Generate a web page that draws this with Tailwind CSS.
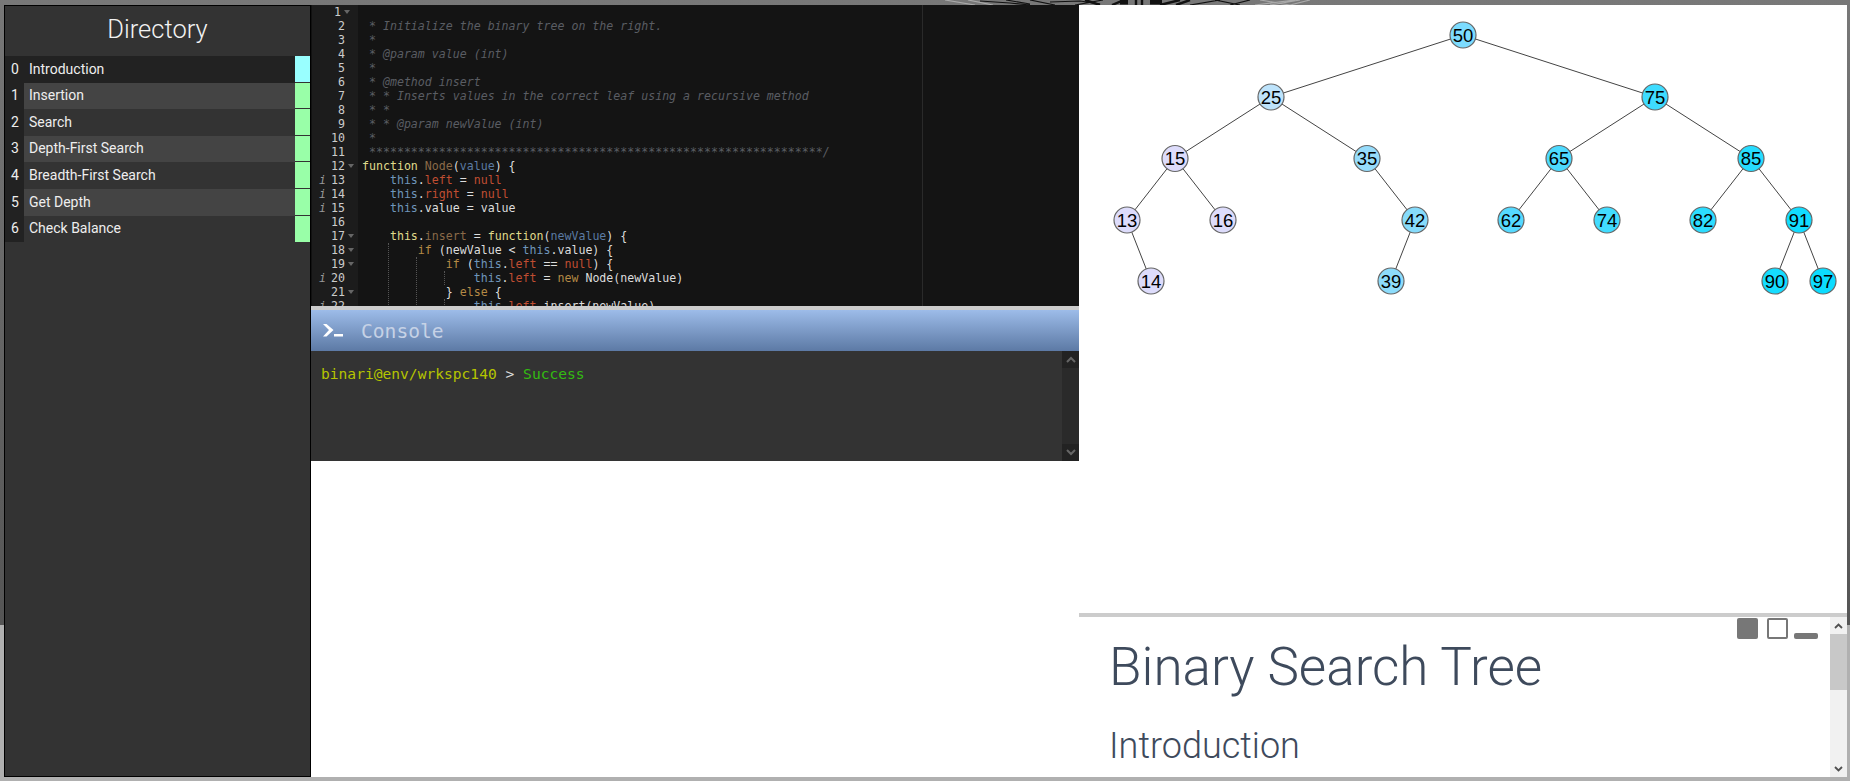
<!DOCTYPE html>
<html lang="en">
<head>
<meta charset="utf-8">
<title>Binary Search Tree</title>
<script src="https://cdn.jsdelivr.net/npm/@tailwindcss/browser@4"></script>
</head>
<body class="overflow-hidden">
<div class="relative w-[1850px] h-[781px] overflow-hidden bg-[#b0b0b0] pt-[5px] pl-[4px] pr-[3px] pb-[4px] flex font-['Roboto',sans-serif]">
  <!-- window backdrop -->
  <div class="absolute left-0 top-0 w-full h-[625px] bg-linear-to-b from-[#787878] to-[#555555]"></div>
  <svg class="absolute left-0 top-0" width="1850" height="5" aria-hidden="true" fill="none" stroke="#111" stroke-width="1.2">
    <path stroke="#aaa" d="M945 0l30 5M968 0l25 5M1255 5l40-5M1270 5l30-5M1290 5l20-5M1260 0l30 5"/>
    <path d="M980 1l30 2 20 2M1006 0l24 4M1030 0l25 5M1050 2l30-1 20 3M1075 5l28-5M1190 5l30-5M1215 0l25 5M1230 5l20-5"/>
    <path stroke-width="2.4" d="M1085 0l15 5M1112 5l12-5M1136 0v5M1142 0v5M1160 5l20-5M1176 5l14-5"/>
    <path stroke-width="5" d="M1120 2h8M1150 2h12"/>
  </svg>

  <!-- directory -->
  <aside class="relative w-[307px] h-[772px] shrink-0 border border-black bg-[#333333] text-[#eeeeee]">
    <h2 class="h-[50px] pb-[4px] flex items-center justify-center text-[25.5px] font-light text-[#f2f2f2]">Directory</h2>
    <ul class="text-[14px]">
      <li class="h-[26.6px] flex bg-[#222222]"><span class="w-[19px] pb-[0.5px] flex items-center justify-center pl-[1px]">0</span><span class="flex-1 pb-[0.5px] flex items-center pl-[5px]">Introduction</span><span class="w-[15px] bg-[#99ffff] border-b border-[#333333]"></span></li>
      <li class="h-[26.6px] flex bg-[#444444]"><span class="w-[19px] pb-[0.5px] flex items-center justify-center pl-[1px] bg-[#222222]">1</span><span class="flex-1 pb-[0.5px] flex items-center pl-[5px]">Insertion</span><span class="w-[15px] bg-[#99ffa8] border-b border-[#333333]"></span></li>
      <li class="h-[26.6px] flex bg-[#333333]"><span class="w-[19px] pb-[0.5px] flex items-center justify-center pl-[1px] bg-[#222222]">2</span><span class="flex-1 pb-[0.5px] flex items-center pl-[5px]">Search</span><span class="w-[15px] bg-[#99ffa8] border-b border-[#333333]"></span></li>
      <li class="h-[26.6px] flex bg-[#444444]"><span class="w-[19px] pb-[0.5px] flex items-center justify-center pl-[1px] bg-[#222222]">3</span><span class="flex-1 pb-[0.5px] flex items-center pl-[5px]">Depth-First Search</span><span class="w-[15px] bg-[#99ffa8] border-b border-[#333333]"></span></li>
      <li class="h-[26.6px] flex bg-[#333333]"><span class="w-[19px] pb-[0.5px] flex items-center justify-center pl-[1px] bg-[#222222]">4</span><span class="flex-1 pb-[0.5px] flex items-center pl-[5px]">Breadth-First Search</span><span class="w-[15px] bg-[#99ffa8] border-b border-[#333333]"></span></li>
      <li class="h-[26.6px] flex bg-[#444444]"><span class="w-[19px] pb-[0.5px] flex items-center justify-center pl-[1px] bg-[#222222]">5</span><span class="flex-1 pb-[0.5px] flex items-center pl-[5px]">Get Depth</span><span class="w-[15px] bg-[#99ffa8] border-b border-[#333333]"></span></li>
      <li class="h-[26.6px] flex bg-[#333333]"><span class="w-[19px] pb-[0.5px] flex items-center justify-center pl-[1px] bg-[#222222]">6</span><span class="flex-1 pb-[0.5px] flex items-center pl-[5px]">Check Balance</span><span class="w-[15px] bg-[#99ffa8]"></span></li>
    </ul>
  </aside>

  <!-- editor + console -->
  <main class="relative w-[768px] h-[772px] shrink-0 bg-white flex flex-col">
    <div class="relative h-[301px] shrink-0 overflow-hidden flex bg-[#141414] font-['DejaVu_Sans_Mono',monospace] text-[11.6px] leading-[14px]">
      <div class="w-[47px] shrink-0 bg-[#1c1c1c] text-[#cccccc] border-l border-[#111111]">
        <div class="relative h-[14px] pr-[17px] text-right">1<i class="absolute right-[8px] top-[5px] w-0 h-0 border-x-[3px] border-t-[4px] border-x-transparent border-t-[#666666]"></i></div>
        <div class="relative h-[14px] pr-[13px] text-right">2</div>
        <div class="relative h-[14px] pr-[13px] text-right">3</div>
        <div class="relative h-[14px] pr-[13px] text-right">4</div>
        <div class="relative h-[14px] pr-[13px] text-right">5</div>
        <div class="relative h-[14px] pr-[13px] text-right">6</div>
        <div class="relative h-[14px] pr-[13px] text-right">7</div>
        <div class="relative h-[14px] pr-[13px] text-right">8</div>
        <div class="relative h-[14px] pr-[13px] text-right">9</div>
        <div class="relative h-[14px] pr-[13px] text-right">10</div>
        <div class="relative h-[14px] pr-[13px] text-right">11</div>
        <div class="relative h-[14px] pr-[13px] text-right">12<i class="absolute right-[4px] top-[5px] w-0 h-0 border-x-[3px] border-t-[4px] border-x-transparent border-t-[#666666]"></i></div>
        <div class="relative h-[14px] pr-[13px] text-right"><em class="absolute left-[7px] text-[#999999]">i</em>13</div>
        <div class="relative h-[14px] pr-[13px] text-right"><em class="absolute left-[7px] text-[#999999]">i</em>14</div>
        <div class="relative h-[14px] pr-[13px] text-right"><em class="absolute left-[7px] text-[#999999]">i</em>15</div>
        <div class="relative h-[14px] pr-[13px] text-right">16</div>
        <div class="relative h-[14px] pr-[13px] text-right">17<i class="absolute right-[4px] top-[5px] w-0 h-0 border-x-[3px] border-t-[4px] border-x-transparent border-t-[#666666]"></i></div>
        <div class="relative h-[14px] pr-[13px] text-right">18<i class="absolute right-[4px] top-[5px] w-0 h-0 border-x-[3px] border-t-[4px] border-x-transparent border-t-[#666666]"></i></div>
        <div class="relative h-[14px] pr-[13px] text-right">19<i class="absolute right-[4px] top-[5px] w-0 h-0 border-x-[3px] border-t-[4px] border-x-transparent border-t-[#666666]"></i></div>
        <div class="relative h-[14px] pr-[13px] text-right"><em class="absolute left-[7px] text-[#999999]">i</em>20</div>
        <div class="relative h-[14px] pr-[13px] text-right">21<i class="absolute right-[4px] top-[5px] w-0 h-0 border-x-[3px] border-t-[4px] border-x-transparent border-t-[#666666]"></i></div>
        <div class="relative h-[14px] pr-[13px] text-right"><em class="absolute left-[7px] text-[#999999]">i</em>22</div>
      </div>
      <div class="relative flex-1 pl-[4px] text-[#dddddd]">
        <div class="h-[14px]"></div>
        <div class="h-[14px] whitespace-pre italic text-[#5a5d63]"> * Initialize the binary tree on the right.</div>
        <div class="h-[14px] whitespace-pre italic text-[#5a5d63]"> *</div>
        <div class="h-[14px] whitespace-pre italic text-[#5a5d63]"> * @param value (int)</div>
        <div class="h-[14px] whitespace-pre italic text-[#5a5d63]"> *</div>
        <div class="h-[14px] whitespace-pre italic text-[#5a5d63]"> * @method insert</div>
        <div class="h-[14px] whitespace-pre italic text-[#5a5d63]"> * * Inserts values in the correct leaf using a recursive method</div>
        <div class="h-[14px] whitespace-pre italic text-[#5a5d63]"> * *</div>
        <div class="h-[14px] whitespace-pre italic text-[#5a5d63]"> * * @param newValue (int)</div>
        <div class="h-[14px] whitespace-pre italic text-[#5a5d63]"> *</div>
        <div class="h-[14px] whitespace-pre italic text-[#5a5d63]"> *****************************************************************/</div>
        <div class="h-[14px] whitespace-pre"><span class="text-[#e0dc8c]">function</span> <span class="text-[#8a6a48]">Node</span>(<span class="text-[#5b7ba3]">value</span>) {</div>
        <div class="h-[14px] whitespace-pre">    <span class="text-[#6f96bb]">this</span>.<span class="text-[#c04e32]">left</span> = <span class="text-[#c04e32]">null</span></div>
        <div class="h-[14px] whitespace-pre">    <span class="text-[#6f96bb]">this</span>.<span class="text-[#c04e32]">right</span> = <span class="text-[#c04e32]">null</span></div>
        <div class="h-[14px] whitespace-pre">    <span class="text-[#6f96bb]">this</span>.value = value</div>
        <div class="h-[14px]"></div>
        <div class="h-[14px] whitespace-pre">    <span class="text-[#e0dc8c]">this</span>.<span class="text-[#8a6a48]">insert</span> = <span class="text-[#e0dc8c]">function</span>(<span class="text-[#5b7ba3]">newValue</span>) {</div>
        <div class="h-[14px] whitespace-pre">        <span class="text-[#b58a45]">if</span> (newValue &lt; <span class="text-[#6f96bb]">this</span>.value) {</div>
        <div class="h-[14px] whitespace-pre">            <span class="text-[#b58a45]">if</span> (<span class="text-[#6f96bb]">this</span>.<span class="text-[#c04e32]">left</span> == <span class="text-[#c04e32]">null</span>) {</div>
        <div class="h-[14px] whitespace-pre">                <span class="text-[#6f96bb]">this</span>.<span class="text-[#c04e32]">left</span> = <span class="text-[#b58a45]">new</span> Node(newValue)</div>
        <div class="h-[14px] whitespace-pre">            } <span class="text-[#b58a45]">else</span> {</div>
        <div class="h-[14px] whitespace-pre">                <span class="text-[#6f96bb]">this</span>.<span class="text-[#c04e32]">left</span>.insert(newValue)</div>
        <!-- indent guides and print margin -->
        <span class="absolute left-[30px] top-[238px] h-[70px] border-l border-dotted border-[#555555]"></span>
        <span class="absolute left-[58px] top-[252px] h-[56px] border-l border-dotted border-[#555555]"></span>
        <span class="absolute left-[86px] top-[266px] h-[14px] border-l border-dotted border-[#555555]"></span>
        <span class="absolute left-[86px] top-[294px] h-[14px] border-l border-dotted border-[#555555]"></span>
        <span class="absolute left-[564px] top-0 h-full border-l border-[#2a2a2a]"></span>
      </div>
    </div>
    <div class="h-[4px] shrink-0 bg-[#cccccc]"></div>
    <div class="h-[41px] shrink-0 flex items-center bg-linear-to-b from-[#9dbce9] to-[#5d7aa5] font-['DejaVu_Sans_Mono',monospace]">
      <svg class="ml-[12px] mr-[18px]" width="20" height="14" viewBox="0 0 20 14" fill="#ffffff" aria-hidden="true"><path d="M0 0h3.5l7 6-7 6.5H0l6-6.5zM11 10h9v2.5h-9z"/></svg>
      <span class="text-[19.6px] pt-[2px] text-[#c6d2e6]">Console</span>
    </div>
    <div class="relative h-[110px] shrink-0 bg-[#333333] flex font-['DejaVu_Sans_Mono',monospace] text-[14.6px]">
      <p class="flex-1 pl-[10px] pt-[14px] leading-[18px] whitespace-pre"><span class="text-[#b5c400]">binari@env/wrkspc140</span><span class="text-[#dddddd]"> &gt; </span><span class="text-[#33bb11]">Success</span></p>
      <div class="w-[17px] h-full flex flex-col justify-between bg-[#2a2a2a]">
        <div class="h-[17px] bg-[#222222] flex items-center justify-center"><svg width="10" height="7" viewBox="0 0 10 7" fill="none" stroke="#666666" stroke-width="2" aria-hidden="true"><path d="M1 6l4-4 4 4"/></svg></div>
        <div class="h-[17px] bg-[#222222] flex items-center justify-center"><svg width="10" height="7" viewBox="0 0 10 7" fill="none" stroke="#666666" stroke-width="2" aria-hidden="true"><path d="M1 1l4 4 4-4"/></svg></div>
      </div>
    </div>
  </main>

  <!-- tree + notes -->
  <section class="relative w-[768px] h-[772px] shrink-0 bg-white flex flex-col">
    <div class="relative h-[608px] shrink-0">
      <svg class="absolute left-[-1079px] top-[-5px]" width="1850" height="613" viewBox="0 0 1850 613" font-family="'Liberation Sans',Arial,sans-serif" font-size="18.5" text-anchor="middle">
        <g stroke="#444444" stroke-width="1">
          <path d="M1463 35L1271 97M1463 35L1655 97M1271 97L1175 158.5M1271 97L1367 158.5M1655 97L1559 158.5M1655 97L1751 158.5M1175 158.5L1127 220M1175 158.5L1223 220M1367 158.5L1415 220M1559 158.5L1511 220M1559 158.5L1607 220M1751 158.5L1703 220M1751 158.5L1799 220M1127 220L1151 281M1415 220L1391 281M1799 220L1775 281M1799 220L1823 281"/>
        </g>
        <g stroke="#666666" stroke-width="1.2">
          <circle cx="1463" cy="35" r="13" fill="#7cdcff"/>
          <circle cx="1271" cy="97" r="13" fill="#bde3fb"/>
          <circle cx="1655" cy="97" r="13" fill="#3edcff"/>
          <circle cx="1175" cy="158.5" r="13" fill="#dddcfb"/>
          <circle cx="1367" cy="158.5" r="13" fill="#96dcfb"/>
          <circle cx="1559" cy="158.5" r="13" fill="#4ddaff"/>
          <circle cx="1751" cy="158.5" r="13" fill="#26dcff"/>
          <circle cx="1127" cy="220" r="13" fill="#dddcfb"/>
          <circle cx="1223" cy="220" r="13" fill="#dddcfb"/>
          <circle cx="1415" cy="220" r="13" fill="#86dbfb"/>
          <circle cx="1511" cy="220" r="13" fill="#55d9ff"/>
          <circle cx="1607" cy="220" r="13" fill="#42dcff"/>
          <circle cx="1703" cy="220" r="13" fill="#2cdcff"/>
          <circle cx="1799" cy="220" r="13" fill="#12dcff"/>
          <circle cx="1151" cy="281" r="13" fill="#dddcfb"/>
          <circle cx="1391" cy="281" r="13" fill="#8ddcfb"/>
          <circle cx="1775" cy="281" r="13" fill="#15dcff"/>
          <circle cx="1823" cy="281" r="13" fill="#0cdcff"/>
        </g>
        <g fill="#000000">
          <text x="1463" y="41.5">50</text>
          <text x="1271" y="103.5">25</text>
          <text x="1655" y="103.5">75</text>
          <text x="1175" y="165">15</text>
          <text x="1367" y="165">35</text>
          <text x="1559" y="165">65</text>
          <text x="1751" y="165">85</text>
          <text x="1127" y="226.5">13</text>
          <text x="1223" y="226.5">16</text>
          <text x="1415" y="226.5">42</text>
          <text x="1511" y="226.5">62</text>
          <text x="1607" y="226.5">74</text>
          <text x="1703" y="226.5">82</text>
          <text x="1799" y="226.5">91</text>
          <text x="1151" y="287.5">14</text>
          <text x="1391" y="287.5">39</text>
          <text x="1775" y="287.5">90</text>
          <text x="1823" y="287.5">97</text>
        </g>
      </svg>
    </div>
    <div class="h-[4px] shrink-0 bg-[#cccccc]"></div>
    <div class="relative flex-1 flex overflow-hidden">
      <article class="flex-1 pl-[30px] pt-[22px] text-[#3e4a5c] font-light">
        <h1 class="text-[53px] leading-[56px]">Binary Search Tree</h1>
        <h2 class="mt-[29px] text-[36px] leading-[44px]">Introduction</h2>
      </article>
      <div class="absolute left-[658px] top-[1px] flex items-end gap-[9px]">
        <span class="w-[21px] h-[21px] rounded-[2px] bg-[#777777]"></span>
        <span class="w-[21px] h-[21px] rounded-[2px] border-2 border-[#777777] bg-white"></span>
        <span class="w-[24px] h-[6px] -ml-[3px] rounded-[2px] bg-[#777777]"></span>
      </div>
      <div class="w-[17px] shrink-0 flex flex-col bg-[#f1f1f1]">
        <div class="h-[17px] flex items-center justify-center"><svg width="9" height="6" viewBox="0 0 9 6" fill="none" stroke="#505050" stroke-width="1.8" aria-hidden="true"><path d="M1 5l3.5-3.5L8 5"/></svg></div>
        <div class="h-[56px] bg-[#c8c8c8]"></div>
        <div class="flex-1"></div>
        <div class="h-[17px] flex items-center justify-center"><svg width="9" height="6" viewBox="0 0 9 6" fill="none" stroke="#505050" stroke-width="1.8" aria-hidden="true"><path d="M1 1l3.5 3.5L8 1"/></svg></div>
      </div>
    </div>
  </section>
</div>
</body>
</html>
